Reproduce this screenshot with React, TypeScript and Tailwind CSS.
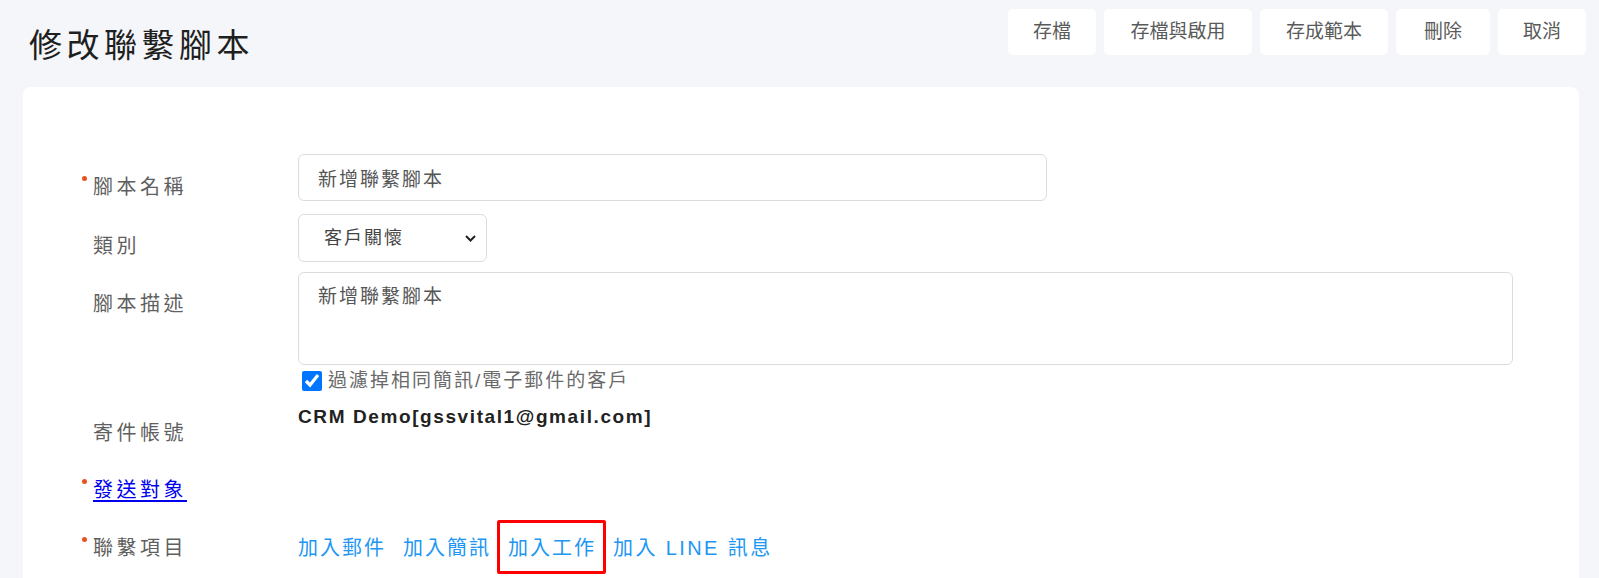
import { useState } from "react"

const buttons = [
  { label: "存檔", w: "w-[88px]" },
  { label: "存檔與啟用", w: "w-[148px]" },
  { label: "存成範本", w: "w-[128px]" },
  { label: "刪除", w: "w-[94px]" },
  { label: "取消", w: "w-[88px]" },
]

function Label({ text, required, link }: { text: string; required?: boolean; link?: boolean }) {
  return (
    <div className="w-[275px] shrink-0 pl-[70px]">
      <span className="relative inline-block leading-[30px] tracking-[3.5px]">
        {required && <span className="absolute -left-[11px] top-[4px] h-[5px] w-[5px] rounded-full bg-[#e8531c]" />}
        {link ? (
          <a href="#" className="text-[#0000ee] underline underline-offset-[3px]">
            {text}
          </a>
        ) : (
          <span className="text-[#5f5f5f]">{text}</span>
        )}
      </span>
    </div>
  )
}

export default function App() {
  const [filter, setFilter] = useState(true)

  return (
    <div className="min-h-[578px] overflow-hidden bg-[#f5f6fa] font-['Liberation_Sans','Noto_Sans_CJK_TC',sans-serif] tracking-[2px]">
      {/* Header */}
      <div className="flex h-[87px] items-start justify-between">
        <h1 className="ml-[29px] mt-[21px] font-['Noto_Sans_CJK_TC',sans-serif] text-[33px] font-normal leading-[44px] tracking-[4.5px] text-[#1f1f1f]">
          修改聯繫腳本
        </h1>
        <div className="mr-[13px] mt-[9px] flex gap-2">
          {buttons.map((b) => (
            <button
              key={b.label}
              className={`${b.w} h-[46px] rounded-[5px] bg-white text-[19px] tracking-normal text-[#5a5a5a]`}
            >
              {b.label}
            </button>
          ))}
        </div>
      </div>

      {/* Card */}
      <div className="ml-[23px] mr-[20px] min-h-[520px] rounded-[8px] bg-white pt-[67px] text-[20px]">
        {/* 腳本名稱 */}
        <div className="flex items-start">
          <div className="pt-[18px]">
            <Label text="腳本名稱" required />
          </div>
          <input
            defaultValue="新增聯繫腳本"
            className="h-[47px] w-[749px] rounded-[6px] border border-[#dcdcdc] px-[19px] text-[19px] text-[#555] outline-none"
          />
        </div>

        {/* 類別 */}
        <div className="mt-[12px] flex items-start">
          <div className="pt-[17px]">
            <Label text="類別" />
          </div>
          <div className="relative h-[48px] w-[189px]">
            <select
              defaultValue="客戶關懷"
              className="h-full w-full appearance-none rounded-[6px] border border-[#dcdcdc] bg-white pl-[25px] text-[18px] text-[#444] outline-none"
            >
              <option>客戶關懷</option>
              <option>行銷活動</option>
            </select>
            <svg
              className="pointer-events-none absolute right-[10px] top-[19px] h-[11px] w-[13px]"
              viewBox="0 0 13 11"
              fill="none"
              stroke="#222"
              strokeWidth="2"
            >
              <path d="M2 3l4.5 4.5L11 3" />
            </svg>
          </div>
        </div>

        {/* 腳本描述 */}
        <div className="mt-[10px] flex items-start">
          <div className="pt-[17px]">
            <Label text="腳本描述" />
          </div>
          <div className="flex-1 pr-[66px]">
            <textarea
              defaultValue="新增聯繫腳本"
              className="block h-[93px] w-full resize-none rounded-[6px] border border-[#dcdcdc] px-[19px] pt-[10px] text-[19px] leading-[28px] text-[#555] outline-none"
            />
            <label className="mt-[4px] flex h-[24px] items-center text-[19px] text-[#6a6a6a]">
              <input
                type="checkbox"
                checked={filter}
                onChange={(e) => setFilter(e.target.checked)}
                className="m-0 ml-[4px] mr-[6px] h-[20px] w-[20px]"
              />
              過濾掉相同簡訊/電子郵件的客戶
            </label>
          </div>
        </div>

        {/* 寄件帳號 */}
        <div className="mt-[10px] flex items-start">
          <div className="pt-[15px]">
            <Label text="寄件帳號" />
          </div>
          <div className="text-[19px] font-bold leading-[28px] tracking-[1.6px] text-[#222]">
            CRM Demo[gssvital1@gmail.com]
          </div>
        </div>

        {/* 發送對象 */}
        <div className="mt-[27px] flex">
          <Label text="發送對象" required link />
        </div>

        {/* 聯繫項目 */}
        <div className="mt-[28px] flex items-start">
          <Label text="聯繫項目" required />
          <div className="flex gap-[17px] text-[20px] leading-[30px] text-[#2196f3]">
            <a href="#">加入郵件</a>
            <a href="#">加入簡訊</a>
            <a href="#" className="relative">
              加入工作
              <span className="pointer-events-none absolute -bottom-[11px] -left-[11px] -right-[10px] -top-[13px] rounded-[2px] border-[3px] border-[#ff0000]" />
            </a>
            <a href="#" className="tracking-[2.4px]">加入 LINE 訊息</a>
          </div>
        </div>
      </div>
    </div>
  )
}
